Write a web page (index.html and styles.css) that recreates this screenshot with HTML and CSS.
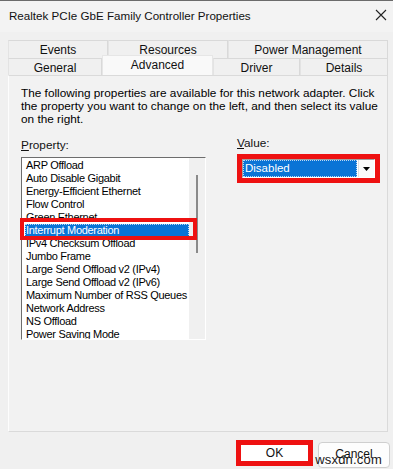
FILE: index.html
```html
<!DOCTYPE html>
<html lang="en">
<head>
<meta charset="UTF-8">
<title>Realtek PCIe GbE Family Controller Properties</title>
<link rel="stylesheet" href="styles.css">
</head>
<body>

<div class="titlebar">
    <span class="title">Realtek PCIe GbE Family Controller Properties</span>
    <svg class="close" width="12" height="12" viewBox="0 0 12 12">
        <path d="M1 1 L11 11 M11 1 L1 11" stroke="#222" stroke-width="1.1" fill="none"/>
    </svg>
</div>

<div class="tabs">
    <div class="tab-row">
        <div class="tab" style="width: 100px;">Events</div>
        <div class="tab" style="width: 120px;">Resources</div>
        <div class="tab" style="width: 160px;">Power Management</div>
    </div>
    <div class="tab-row">
        <div class="tab" style="width: 94px;">General</div>
        <div class="tab active" style="width: 111px;">Advanced</div>
        <div class="tab" style="width: 87px;">Driver</div>
        <div class="tab" style="width: 88px;">Details</div>
    </div>
</div>

<div class="panel">
    <p class="desc">The following properties are available for this network adapter. Click the property you want to change on the left, and then select its value on the right.</p>
    <div class="cols">
        <div class="col-left">
            <label class="field-label"><u>P</u>roperty:</label>
            <div class="listbox">
                <ul class="items">
                    <li>ARP Offload</li>
                    <li>Auto Disable Gigabit</li>
                    <li>Energy-Efficient Ethernet</li>
                    <li>Flow Control</li>
                    <li>Green Ethernet</li>
                    <li class="selected">Interrupt Moderation</li>
                    <li>IPv4 Checksum Offload</li>
                    <li>Jumbo Frame</li>
                    <li>Large Send Offload v2 (IPv4)</li>
                    <li>Large Send Offload v2 (IPv6)</li>
                    <li>Maximum Number of RSS Queues</li>
                    <li>Network Address</li>
                    <li>NS Offload</li>
                    <li>Power Saving Mode</li>
                </ul>
                <div class="scrollbar"><div class="thumb"></div></div>
                <div class="mark mark-item"></div>
            </div>
        </div>
        <div class="col-right">
            <label class="field-label"><u>V</u>alue:</label>
            <div class="combo-mark">
                <div class="combo">
                    <span class="combo-value">Disabled</span>
                    <span class="combo-btn">
                        <svg width="7" height="4" viewBox="0 0 7 4"><path d="M0 0 H7 L3.5 4 Z" fill="#000"/></svg>
                    </span>
                </div>
            </div>
        </div>
    </div>
</div>

<div class="buttons">
    <button class="btn btn-ok">OK</button>
    <button class="btn btn-cancel">Cancel</button>
    <span class="watermark">wsxdn.com</span>
</div>

</body>
</html>
```

FILE: styles.css
```css
body {
    margin: 0;
    width: 393px;
    height: 469px;
    overflow: hidden;
    background-color: #f0f0f0;
    font-family: "Liberation Sans", Arial, sans-serif;
    font-size: 11.8px;
    color: #000;
    position: relative;
}
.titlebar {
    height: 31px;
    border-top: 1px solid #6b6b6b;
    background-color: #f3f3f3;
    display: flex;
    align-items: center;
    justify-content: space-between;
    padding: 0 4px 0 9px;
}
.title {
    font-size: 11.6px;
    color: #111;
    margin-top: -2px;
}
.close {
    margin-right: 2px;
    margin-top: -3px;
}
.tabs {
    margin: 8px 0 0 8px;
    width: 380px;
}
.tab-row {
    display: flex;
    height: 18px;
    align-items: flex-end;
}
.tab-row + .tab-row {
    height: 17px;
}
.tab {
    box-sizing: border-box;
    height: 100%;
    border: 1px solid #d9d9d9;
    border-bottom: none;
    border-left-color: #e3e3e3;
    background-color: #f0f0f0;
    text-align: center;
    line-height: 18px;
    color: #111;
    font-size: 12px;
}
.tab-row + .tab-row .tab {
    line-height: 19px;
}
.tab-row + .tab-row .tab.active {
    height: 20px;
    margin-top: -3px;
    background-color: #f9f9f9;
    border-color: #e6e6e6;
    line-height: 18px;
    position: relative;
    z-index: 1;
}
.panel {
    margin-left: 8px;
    width: 380px;
    height: 357px;
    box-sizing: border-box;
    border: 1px solid #dadada;
    border-left-color: #fdfdfd;
    background-color: #f2f2f2;
    padding: 11px 4px 0 12px;
}
.desc {
    margin: 0;
    line-height: 13px;
    width: 362px;
}
.cols {
    display: flex;
    margin-top: 13px;
}
.col-left {
    width: 185px;
}
.col-right {
    margin-left: 31px;
    margin-top: -2px;
}
.field-label {
    display: block;
    line-height: 13px;
    height: 14px;
    color: #111;
}
.field-label u {
    text-decoration-thickness: 1px;
}
.listbox {
    margin-top: 4px;
    position: relative;
    display: flex;
    height: 183px;
    box-sizing: border-box;
    border: 1px solid #fff;
    border-left-color: #6d6d6d;
    border-top-color: #6d6d6d;
    background-color: #fff;
}
.items {
    list-style: none;
    margin: 0;
    padding: 1px 0 0 3px;
    flex: 1;
    overflow: hidden;
    font-size: 11px;
    letter-spacing: -0.3px;
}
.items li {
    height: 13px;
    line-height: 13px;
    white-space: nowrap;
    padding-left: 1px;
}
.items li.selected {
    background-color: #0a74d6;
    color: #fff;
    outline: 1px dotted #bcd8f2;
    outline-offset: -1px;
}
.scrollbar {
    width: 16px;
    background-color: #f0f0f0;
}
.thumb {
    width: 2px;
    height: 78px;
    margin: 17px 0 0 7px;
    background-color: #8a8a8a;
}
.mark {
    position: absolute;
    border: 4px solid #ee1111;
    box-sizing: border-box;
}
.mark-item {
    left: -2px;
    top: 60px;
    width: 177px;
    height: 22px;
}
.combo-mark {
    margin-top: 3px;
    width: 143px;
    height: 29px;
    box-sizing: border-box;
    border: 5px solid #ee1111;
}
.combo {
    display: flex;
    height: 19px;
    box-sizing: border-box;
    border: 1px solid #a0a0a0;
    border-right-color: #fff;
    border-bottom-color: #fff;
    background-color: #fff;
}
.combo-value {
    flex: 1;
    background-color: #0a74d6;
    color: #fff;
    line-height: 17px;
    padding-left: 2px;
    font-size: 11.5px;
    outline: 1px dotted #bcd8f2;
    outline-offset: -1px;
}
.combo-btn {
    width: 15px;
    margin-left: 1px;
    display: flex;
    align-items: center;
    justify-content: center;
    background-color: #fafafa;
    border-left: 1px solid #e0e0e0;
}
.buttons {
    display: flex;
    justify-content: flex-end;
    gap: 5px;
    margin-top: 8px;
    padding-right: 3px;
    position: relative;
}
.btn {
    font-family: "Liberation Sans", Arial, sans-serif;
    font-size: 12px;
    color: #111;
    background-color: #fdfdfd;
    cursor: pointer;
    box-sizing: border-box;
}
.btn-ok {
    width: 77px;
    height: 26px;
    border: 5px solid #ee1111;
    background-color: #fff;
    padding: 0;
}
.btn-cancel {
    width: 72px;
    height: 26px;
    margin-top: 2px;
    border: 1px solid #cfcfcf;
    border-radius: 4px;
    padding: 0 0 2px;
}
.watermark {
    position: absolute;
    right: 11px;
    top: 12px;
    font-size: 13px;
    color: #1a1a1a;
    letter-spacing: 0.2px;
}
```
